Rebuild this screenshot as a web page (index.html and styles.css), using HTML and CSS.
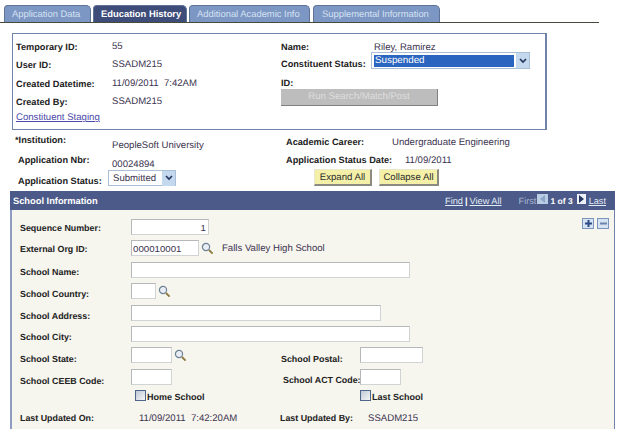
FILE: index.html
```html
<!DOCTYPE html>
<html lang="en">
<head>
    <meta charset="UTF-8">
    <title>Education History</title>
    <link rel="stylesheet" href="styles.css">
</head>
<body>
    <div class="tabs">
        <a class="tab tab-1">Application Data</a>
        <a class="tab tab-2 active">Education History</a>
        <a class="tab tab-3">Additional Academic Info</a>
        <a class="tab tab-4">Supplemental Information</a>
    </div>

    <div class="info-box">
        <div class="info-left">
            <div class="info-row"><span class="label info-label">Temporary ID:</span><span class="value">55</span></div>
            <div class="info-row"><span class="label info-label">User ID:</span><span class="value">SSADM215</span></div>
            <div class="info-row"><span class="label info-label">Created Datetime:</span><span class="value">11/09/2011&nbsp; 7:42AM</span></div>
            <div class="info-row"><span class="label info-label">Created By:</span><span class="value">SSADM215</span></div>
            <a class="staging-link">Constituent Staging</a>
        </div>
        <div class="info-right">
            <div class="name-row"><span class="label name-label">Name:</span><span class="value">Riley, Ramirez</span></div>
            <div class="status-row">
                <span class="label status-label">Constituent Status:</span>
                <div class="select status-select">
                    <span class="select-text">Suspended</span>
                    <span class="select-arrow"><svg width="8" height="6" viewBox="0 0 8 6"><path d="M1 1l3 3 3-3" fill="none" stroke="#26365e" stroke-width="1.7"/></svg></span>
                </div>
            </div>
            <div class="id-row label">ID:</div>
            <div class="disabled-btn">Run Search/Match/Post</div>
        </div>
    </div>

    <div class="summary">
        <div class="summary-left">
            <div class="inst-row"><span class="label inst-label">*Institution:</span><span class="value inst-value">PeopleSoft University</span></div>
            <div class="nbr-row"><span class="label nbr-label">Application Nbr:</span><span class="value nbr-value">00024894</span></div>
            <div class="app-status-row">
                <span class="label nbr-label app-status-label">Application Status:</span>
                <div class="select app-select">
                    <span class="select-text">Submitted</span>
                    <span class="select-arrow"><svg width="8" height="6" viewBox="0 0 8 6"><path d="M1 1l3 3 3-3" fill="none" stroke="#26365e" stroke-width="1.7"/></svg></span>
                </div>
            </div>
        </div>
        <div class="summary-right">
            <div class="career-row"><span class="label career-label">Academic Career:</span><span class="value">Undergraduate Engineering</span></div>
            <div class="date-row"><span class="label date-label">Application Status Date:</span><span class="value">11/09/2011</span></div>
            <div class="btn-row">
                <div class="yellow-btn expand-btn">Expand All</div>
                <div class="yellow-btn collapse-btn">Collapse All</div>
            </div>
        </div>
    </div>

    <div class="section">
        <div class="section-head">
            <span class="section-title">School Information</span>
            <div class="pager">
                <a class="pager-link">Find</a><span class="pager-sep">|</span><a class="pager-link">View All</a>
                <span class="pager-first">First</span>
                <span class="page-btn page-prev"><svg width="6" height="8" viewBox="0 0 6 8"><path d="M5 0v8L0 4z" fill="#8fa6c8"/></svg></span>
                <span class="pager-count">1 of 3</span>
                <span class="page-btn page-next"><svg width="6" height="8" viewBox="0 0 6 8"><path d="M1 0v8l5-4z" fill="#26365e"/></svg></span>
                <a class="pager-link">Last</a>
            </div>
        </div>
        <div class="section-body">
            <div class="row-tools">
                <span class="tool-btn"><svg width="9" height="9" viewBox="0 0 9 9"><path d="M4.5 1v7M1 4.5h7" stroke="#2c4a86" stroke-width="2"/></svg></span>
                <span class="tool-btn tool-off"><svg width="9" height="9" viewBox="0 0 9 9"><path d="M1 4.5h7" stroke="#6d84aa" stroke-width="2"/></svg></span>
            </div>

            <div class="field-row seq-row">
                <span class="label field-label">Sequence Number:</span>
                <input class="input w-78 num" type="text" value="1">
            </div>
            <div class="field-row org-row">
                <span class="label field-label">External Org ID:</span>
                <input class="input w-68" type="text" value="000010001">
                <svg class="lookup" width="13" height="13" viewBox="0 0 13 13"><use href="#glass"/></svg>
                <span class="value org-name">Falls Valley High School</span>
            </div>
            <div class="field-row name-field">
                <span class="label field-label low-1">School Name:</span>
                <input class="input w-279" type="text">
            </div>
            <div class="field-row country-row">
                <span class="label field-label low-2">School Country:</span>
                <input class="input w-25" type="text">
                <svg class="lookup" width="13" height="13" viewBox="0 0 13 13"><use href="#glass"/></svg>
            </div>
            <div class="field-row address-row">
                <span class="label field-label low-3">School Address:</span>
                <input class="input w-250" type="text">
            </div>
            <div class="field-row city-row">
                <span class="label field-label low-3">School City:</span>
                <input class="input w-279" type="text">
            </div>
            <div class="field-row state-row">
                <span class="label field-label low-4">School State:</span>
                <input class="input w-41" type="text">
                <svg class="lookup" width="13" height="13" viewBox="0 0 13 13"><use href="#glass"/></svg>
                <span class="label postal-label low-4">School Postal:</span>
                <input class="input w-63" type="text">
            </div>
            <div class="field-row ceeb-row">
                <span class="label field-label low-4">School CEEB Code:</span>
                <input class="input w-41" type="text">
                <span class="label act-label low-3">School ACT Code:</span>
                <input class="input w-41" type="text">
            </div>
            <div class="field-row check-row">
                <label class="check home-check"><span class="check-box"></span><span class="check-text">Home School</span></label>
                <label class="check"><span class="check-box"></span><span class="check-text">Last School</span></label>
            </div>
            <div class="field-row updated-row">
                <span class="label updated-label">Last Updated On:</span>
                <span class="value updated-value">11/09/2011&nbsp; 7:42:20AM</span>
                <span class="label updated-by-label">Last Updated By:</span>
                <span class="value">SSADM215</span>
            </div>
        </div>
    </div>

    <svg class="defs" width="0" height="0">
        <defs>
            <g id="glass">
                <circle cx="5" cy="5" r="3.6" fill="#e8eef4" stroke="#6f8296" stroke-width="1.2"/>
                <path d="M8 8l3.6 3.6" stroke="#8c7a3c" stroke-width="1.8"/>
            </g>
        </defs>
    </svg>
</body>
</html>
```

FILE: styles.css
```css
html, body {
    margin: 0;
    height: 429px;
    overflow: hidden;
    background: #fff;
}

body {
    font-family: "Liberation Sans", Arial, sans-serif;
    font-size: 9.6px;
    color: #333;
    text-rendering: geometricPrecision;
}

.label {
    font-weight: bold;
    font-size: 9.2px;
    color: #222;
    white-space: nowrap;
}

.value {
    color: #3c3350;
    font-size: 9.6px;
    white-space: nowrap;
}

/* tabs */
.tabs {
    display: flex;
    align-items: flex-end;
    width: 595px;
    height: 17px;
    margin-top: 5px;
    padding-left: 4px;
    border-bottom: 1px solid #4a4a3c;
}

.tab {
    box-sizing: border-box;
    height: 17px;
    padding: 2px 0 0 7px;
    margin-right: 2px;
    background: #7d97c4;
    color: #d5e2f2;
    font-size: 9.4px;
    white-space: nowrap;
    border: 1px solid #5f7396;
    border-bottom: 0;
    border-radius: 4px 5px 0 0;
}

.tab.active {
    background: #3d4c78;
    color: #fff;
    font-weight: bold;
    font-size: 9.4px;
    padding-left: 7px;
}

.tab-1 { width: 87px; }
.tab-2 { width: 94px; }
.tab-3 { width: 121px; margin-right: 3px; }
.tab-4 { width: 127px; padding-left: 8px; }

/* info box */
.info-box {
    box-sizing: border-box;
    display: flex;
    width: 535px;
    height: 97px;
    margin: 10px 0 0 12px;
    padding: 6px 0 0 3px;
    border: 1px solid #6f83ab;
    border-width: 1px 2px 1px 1px;
}

.info-left {
    width: 265px;
}

.info-row {
    display: flex;
    height: 18.3px;
    line-height: 14px;
}

.info-label {
    width: 96px;
}

.staging-link {
    display: block;
    margin-top: -1px;
    color: #4a48a8;
    text-decoration: underline;
}

.name-row {
    display: flex;
    height: 11px;
    padding-top: 1px;
    line-height: 13px;
}

.name-label {
    width: 93px;
}

.status-row {
    display: flex;
    align-items: flex-start;
    height: 25px;
}

.status-label {
    width: 90px;
    padding-top: 7px;
}

.select {
    box-sizing: border-box;
    display: flex;
    align-items: center;
    height: 17px;
    border: 1px solid #a9bfd8;
    background: #fff;
    font-size: 9.8px;
}

.status-select {
    width: 159px;
}

.status-select .select-text {
    background: #2a65c0;
    color: #fff;
    flex: 1;
    height: 12px;
    line-height: 12px;
    margin: 0 2px 0 2px;
    padding-left: 1px;
}

.select-arrow {
    display: flex;
    align-items: center;
    justify-content: center;
    width: 13px;
    height: 15px;
    background: #c4d8ee;
}

.app-select {
    width: 68px;
    height: 16px;
    padding-left: 4px;
    font-size: 9.6px;
    color: #3c3350;
}

.app-select .select-text {
    flex: 1;
}

.id-row {
    height: 12px;
    line-height: 12px;
}

.disabled-btn {
    box-sizing: border-box;
    width: 157px;
    height: 17px;
    line-height: 16px;
    text-align: center;
    font-size: 9.6px;
    background: #bdbdbd;
    color: #ddd;
    border-right: 1px solid #808080;
    border-bottom: 1px solid #808080;
}

/* summary */
.summary {
    display: flex;
    height: 61px;
}

.summary-left {
    width: 286px;
    flex: none;
}

.inst-row {
    display: flex;
    margin: 5px 0 0 15px;
    height: 20px;
}

.inst-label {
    width: 97px;
}

.inst-value {
    padding-top: 5px;
}

.nbr-row {
    display: flex;
    margin-left: 18px;
    height: 15px;
}

.nbr-label {
    width: 94px;
}

.nbr-value {
    padding-top: 4px;
}

.app-status-row {
    display: flex;
    align-items: flex-start;
    margin: 0 0 0 18px;
}

.app-status-label {
    width: 90px;
    padding-top: 6px;
}

.career-row {
    display: flex;
    margin-top: 7px;
    height: 18px;
}

.career-label {
    width: 106px;
}

.date-row {
    display: flex;
    height: 11px;
    line-height: 11px;
}

.date-label {
    width: 119px;
}

.btn-row {
    display: flex;
    gap: 7px;
    margin: 3px 0 0 28px;
}

.yellow-btn {
    box-sizing: border-box;
    height: 17px;
    line-height: 15px;
    text-align: center;
    background: #f5f0a8;
    color: #2c2c2c;
    font-size: 9.6px;
    border-right: 2px solid #8a8a80;
    border-bottom: 2px solid #8a8a80;
    border-top: 1px solid #e8e8d0;
    border-left: 1px solid #e8e8d0;
}

.expand-btn { width: 58px; }
.collapse-btn { width: 60px; }

/* school section */
.section {
    margin: 0 0 0 10px;
    width: 605px;
}

.section-head {
    display: flex;
    align-items: center;
    justify-content: space-between;
    box-sizing: border-box;
    height: 19px;
    padding: 0 9px 0 3px;
    background: #4b5a88;
    color: #fff;
}

.section-title {
    font-weight: bold;
    font-size: 9.3px;
}

.pager {
    display: flex;
    align-items: center;
    font-size: 9.2px;
    color: #fff;
}

.pager-link {
    color: #e4ecf6;
    text-decoration: underline;
}

.pager-sep {
    margin: 0 2px;
    font-weight: bold;
}

.pager-first {
    margin: 0 1px 0 17px;
    font-size: 9.2px;
    color: #a9b8d2;
}

.page-btn {
    display: flex;
    align-items: center;
    justify-content: center;
    width: 11px;
    height: 10px;
    margin-bottom: 3px;
}

.page-prev { background: #b8cce4; }
.page-next { background: #eef2f8; width: 9px; }

.pager-count {
    margin: 0 4px 0 2px;
    font-size: 8.5px;
    font-weight: bold;
}

.page-next + .pager-link {
    margin-left: 3px;
}

.section-body {
    position: relative;
    box-sizing: border-box;
    height: 230px;
    padding: 9px 0 0 8px;
    background: #f6f5ee;
    border-left: 2px solid #8d9cc0;
    border-right: 1px solid #6f83ab;
}

.row-tools {
    position: absolute;
    top: 8px;
    right: 5px;
    display: flex;
    gap: 3px;
}

.tool-btn {
    box-sizing: border-box;
    display: flex;
    align-items: center;
    justify-content: center;
    width: 12px;
    height: 11px;
    background: #d6e3f2;
    border: 1px solid #7a94bc;
}

.field-row {
    display: flex;
    align-items: center;
    height: 16px;
    margin-bottom: 5.4px;
}

.field-row .label {
    font-size: 8.9px;
}

.field-label {
    width: 111px;
    flex: none;
    padding-top: 2px;
}

.field-label.low-1, .label.low-1 { padding-top: 4px; }
.field-label.low-2, .label.low-2 { padding-top: 5px; }
.field-label.low-3, .label.low-3 { padding-top: 6px; }
.field-label.low-4, .label.low-4 { padding-top: 8px; }

.input {
    box-sizing: border-box;
    height: 16px;
    margin: 0;
    padding: 0 2px 0 1px;
    background: #fff;
    border: 1px solid #d0d4d4;
    border-top-color: #b4b8b8;
    border-left-color: #b4b8b8;
    font-family: inherit;
    font-size: 9.7px;
    color: #3c3350;
    outline: none;
}

.num { text-align: right; }
.w-78 { width: 78px; }
.w-68 { width: 68px; }
.w-279 { width: 279px; }
.w-25 { width: 25px; }
.w-250 { width: 250px; }
.w-41 { width: 41px; }
.w-63 { width: 63px; }

.lookup {
    margin-left: 2px;
    flex: none;
}

.org-name {
    margin-left: 8px;
}

.postal-label {
    width: 79px;
    margin-left: 94px;
}

.act-label {
    width: 77px;
    margin-left: 111px;
}

.check-row {
    height: 12px;
    margin: -1px 0 0;
    padding-left: 114px;
}

.check {
    display: flex;
    align-items: center;
    font-weight: bold;
    font-size: 9px;
    color: #222;
    white-space: nowrap;
}

.check-text {
    padding-top: 3px;
}

.home-check {
    width: 225px;
}

.check-box {
    box-sizing: border-box;
    width: 11px;
    height: 11px;
    margin: 0 1px 0 1px;
    background: linear-gradient(135deg, #c0c9d6, #f4f5f6);
    border: 1px solid #4e668c;
}

.updated-row {
    margin-top: 9px;
}

.updated-label {
    width: 119px;
    flex: none;
}

.updated-value {
    width: 141px;
}

.updated-by-label {
    width: 88px;
}

.defs {
    position: absolute;
}
```
